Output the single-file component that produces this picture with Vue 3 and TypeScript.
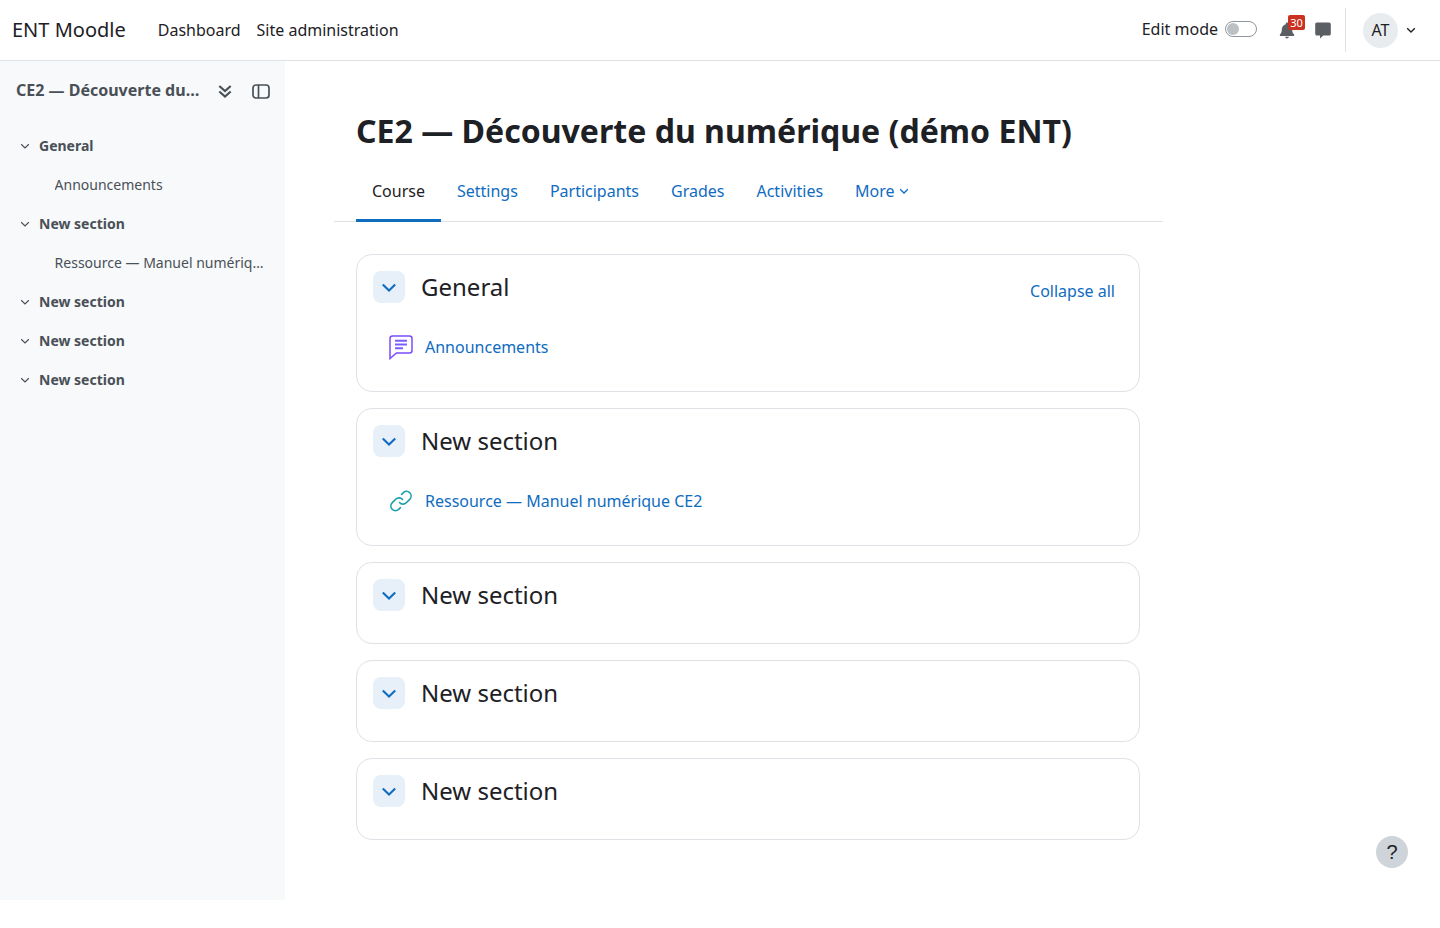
<script setup lang="ts">
/**
 * Course page with top navbar, course index drawer and section cards
 */
interface CourseSection {
  title: string;
  activity?: { label: string; kind: 'forum' | 'url' };
}

const navLinks = ['Dashboard', 'Site administration'];
const tabs = ['Settings', 'Participants', 'Grades', 'Activities'];

const indexItems = [
  { title: 'General', child: 'Announcements' },
  { title: 'New section', child: 'Ressource — Manuel numérique CE2' },
  { title: 'New section' },
  { title: 'New section' },
  { title: 'New section' }
];

const sections: CourseSection[] = [
  { title: 'General', activity: { label: 'Announcements', kind: 'forum' } },
  { title: 'New section', activity: { label: 'Ressource — Manuel numérique CE2', kind: 'url' } },
  { title: 'New section' },
  { title: 'New section' },
  { title: 'New section' }
];
</script>

<template>
  <div class="page">
    <header class="navbar">
      <span class="brand">ENT Moodle</span>
      <nav class="nav-links">
        <a v-for="link in navLinks" :key="link" class="nav-link">{{ link }}</a>
      </nav>
      <div class="nav-right">
        <span class="edit-label">Edit mode</span>
        <span class="switch"><span class="switch-knob"></span></span>
        <span class="bell">
          <svg width="16" height="18" viewBox="0 0 16 18">
            <path fill="#5b5f64" d="M8 1.500c-.7 0-1.200.5-1.200 1.200v.6C4.300 3.900 2.800 6 2.800 8.400c0 2.700-.7 3.700-1.600 4.700-.3.300-.4.600-.4.900 0 .6.500 1 1 1h12.400c.5 0 1-.4 1-1 0-.3-.1-.6-.4-.9-.9-1-1.600-2-1.600-4.700 0-2.400-1.500-4.500-4-5.100v-.6C9.200 2 8.700 1.500 8 1.500zM6.200 15.800c0 1 .8 1.700 1.800 1.700s1.800-.7 1.800-1.700z" />
          </svg>
          <span class="badge">30</span>
        </span>
        <svg class="chat" width="16" height="17" viewBox="0 0 16 17">
          <path fill="#5b5f64" d="M2 .5h12c1 0 1.800.8 1.800 1.800v9.400c0 1-.8 1.800-1.800 1.800H8.200l-3.200 3v-3H2c-1 0-1.800-.8-1.800-1.800V2.300C.2 1.300 1 .5 2 .5z" />
        </svg>
        <span class="nav-divider"></span>
        <span class="avatar">AT</span>
        <svg class="user-caret" width="10" height="10" viewBox="0 0 10 10">
          <path d="M1.200 3.300 5 7l3.800-3.700" fill="none" stroke="#1d2125" stroke-width="1.400" />
        </svg>
      </div>
    </header>

    <div class="body-row">
      <aside class="drawer">
        <div class="drawer-head">
          <span class="drawer-title">CE2 — Découverte du numérique (démo ENT)</span>
          <svg class="collapse-icon" width="14" height="16" viewBox="0 0 14 16">
            <path d="M1.300 3 7 8l5.700-5M1.300 8.500 7 13.500l5.700-5" fill="none" stroke="#495057" stroke-width="2.200" />
          </svg>
          <svg class="panel-icon" width="18" height="16" viewBox="0 0 18 16">
            <rect x="1" y="2" width="16" height="13" rx="3" fill="none" stroke="#495057" stroke-width="1.700" />
            <path d="M6.500 2v13" stroke="#495057" stroke-width="1.700" />
          </svg>
        </div>
        <ul class="index">
          <li v-for="(item, i) in indexItems" :key="i" class="index-group">
            <div class="index-section">
              <svg width="10" height="10" viewBox="0 0 10 10">
                <path d="M1.200 3.300 5 7l3.800-3.700" fill="none" stroke="#495057" stroke-width="1.200" />
              </svg>
              <span>{{ item.title }}</span>
            </div>
            <div v-if="item.child" class="index-child">{{ item.child }}</div>
          </li>
        </ul>
      </aside>

      <main class="main">
        <h1 class="course-title">CE2 — Découverte du numérique (démo ENT)</h1>
        <div class="tabs">
          <a class="tab tab-active">Course</a>
          <a v-for="tab in tabs" :key="tab" class="tab">{{ tab }}</a>
          <a class="tab">
            More
            <svg class="more-caret" width="10" height="10" viewBox="0 0 10 10">
              <path d="M1.200 3.300 5 7l3.800-3.700" fill="none" stroke="#0f6cbf" stroke-width="1.300" />
            </svg>
          </a>
        </div>

        <section v-for="(section, i) in sections" :key="i" class="card">
          <div class="card-head">
            <span class="toggle">
              <svg width="16" height="16" viewBox="0 0 16 16">
                <path d="M1.800 5.500 8 11.500l6.200-6" fill="none" stroke="#0f6cbf" stroke-width="2.100" />
              </svg>
            </span>
            <h2 class="section-title">{{ section.title }}</h2>
            <a v-if="i === 0" class="collapse-all">Collapse all</a>
          </div>
          <div v-if="section.activity" class="activity">
            <svg v-if="section.activity.kind === 'forum'" width="26" height="26" viewBox="0 0 26 26">
              <path d="M4.500 2h17c1.500 0 2.500 1 2.500 2.500v12c0 1.500-1 2.500-2.500 2.500H8.500L2 24.500v-20C2 3 3 2 4.500 2z" fill="none" stroke="#7a4dff" stroke-width="1.500" />
              <path d="M7 6.800h12M7 10.500h12M7 14.200h8" stroke="#7a5cff" stroke-width="2" />
            </svg>
            <svg v-else width="26" height="26" viewBox="0 0 26 26">
              <g fill="none" stroke="#1a9fae" stroke-width="1.600" stroke-linecap="round">
                <path d="M11.500 14.500a4.600 4.600 0 0 0 6.800.2l3.600-3.600a4.600 4.600 0 0 0-6.500-6.500l-1.800 1.800" />
                <path d="M14.500 11.500a4.600 4.600 0 0 0-6.800-.2l-3.600 3.600a4.600 4.600 0 0 0 6.500 6.500l1.800-1.800" />
              </g>
            </svg>
            <a class="activity-link">{{ section.activity.label }}</a>
          </div>
        </section>
      </main>
    </div>

    <span class="help">?</span>
  </div>
</template>

<style>
html,
body {
  margin: 0;
  background: #fff;
}
</style>

<style scoped>
.page {
  position: relative;
  height: 928px;
  overflow: hidden;
  font-family: "Noto Sans", sans-serif;
  font-size: 16px;
  color: #1d2125;
  background: #fff;
}

.navbar {
  display: flex;
  align-items: center;
  height: 60px;
  padding: 0 12px;
  border-bottom: 1px solid #dee2e6;
  background: #fff;
}

.brand {
  font-size: 20px;
  line-height: 30px;
  margin-right: 16px;
}

.nav-links {
  display: flex;
  margin-left: 8px;
}

.nav-link {
  padding: 0 8px;
  line-height: 24px;
}

.nav-right {
  display: flex;
  align-items: center;
  margin-left: auto;
  height: 44px;
}

.edit-label {
  margin-top: -2px;
  margin-right: 7px;
}

.switch {
  position: relative;
  box-sizing: border-box;
  width: 32px;
  height: 16px;
  margin-top: -2px;
  border: 1px solid #8f959e;
  border-radius: 8px;
  background: #fff;
}

.switch-knob {
  position: absolute;
  left: 1px;
  top: 1px;
  width: 12px;
  height: 12px;
  border-radius: 50%;
  background: #bcc1c6;
}

.bell {
  position: relative;
  display: flex;
  margin-left: 22px;
}

.badge {
  position: absolute;
  left: 9px;
  top: -6px;
  min-width: 17px;
  height: 15px;
  font-size: 11px;
  line-height: 15px;
  text-align: center;
  color: #fff;
  background: #ca3120;
  border-radius: 2px;
}

.chat {
  margin-left: 20px;
}

.nav-divider {
  width: 1px;
  height: 44px;
  margin-left: 14px;
  background: #dee2e6;
}

.avatar {
  display: flex;
  align-items: center;
  justify-content: center;
  width: 35px;
  height: 35px;
  margin-left: 17px;
  border-radius: 50%;
  background: #e9ecef;
}

.user-caret {
  margin-left: 8px;
  margin-right: 12px;
}

.body-row {
  display: flex;
}

.drawer {
  box-sizing: border-box;
  width: 285px;
  height: 839px;
  flex-shrink: 0;
  padding: 0 16px;
  background: #f8f9fa;
  color: #495057;
}

.drawer-head {
  display: flex;
  align-items: center;
  height: 60px;
}

.drawer-title {
  flex: 0 0 184px;
  margin-top: -2px;
  font-weight: 700;
  font-size: 16px;
  white-space: nowrap;
  overflow: hidden;
  text-overflow: ellipsis;
}

.collapse-icon {
  flex-shrink: 0;
  margin-left: 18px;
}

.panel-icon {
  flex-shrink: 0;
  margin-left: 20px;
}

.index {
  list-style: none;
  margin: 5px 0 0;
  padding: 0;
}

.index-section {
  display: flex;
  align-items: center;
  gap: 9px;
  height: 39px;
  padding-left: 4px;
  font-size: 14px;
  font-weight: 700;
}

.index-child {
  width: 210px;
  height: 39px;
  margin-left: 38.6px;
  font-size: 14px;
  line-height: 39px;
  white-space: nowrap;
  overflow: hidden;
  text-overflow: ellipsis;
}

.main {
  box-sizing: border-box;
  width: 878px;
  padding: 48px 0 0 49px;
}

.course-title {
  margin: 0;
  font-size: 32.06px;
  line-height: 44px;
  font-weight: 700;
  padding-left: 22px;
}

.tabs {
  display: flex;
  width: 807px;
  height: 60px;
  margin-top: 8px;
  padding-left: 22px;
  border-bottom: 1px solid #dee2e6;
}

.tab {
  display: flex;
  align-items: center;
  gap: 4px;
  padding: 0 16px;
  color: #0f6cbf;
  line-height: 24px;
}

.tab-active {
  color: #1d2125;
  box-shadow: inset 0 -3px 0 #0f6cbf;
  margin-bottom: -1px;
  padding-bottom: 1px;
}

.more-caret {
  margin-top: -1px;
}

.card {
  box-sizing: border-box;
  margin: 0 0 16px 22px;
  width: 784px;
  min-height: 82px;
  padding: 16px;
  border: 1px solid #dee2e6;
  border-radius: 16px;
}

.card:first-of-type {
  margin-top: 32px;
}

.card-head {
  display: flex;
  align-items: center;
  height: 32px;
}

.toggle {
  display: flex;
  align-items: center;
  justify-content: center;
  width: 32px;
  height: 32px;
  border-radius: 8px;
  background: #e7eff9;
}

.section-title {
  margin: 0 0 0 16px;
  font-size: 24px;
  line-height: 32px;
  font-weight: 400;
}

.collapse-all {
  margin-left: auto;
  margin-right: 8px;
  margin-top: 8px;
  color: #0f6cbf;
}

.activity {
  display: flex;
  align-items: center;
  height: 26px;
  margin-top: 31px;
  margin-bottom: 15px;
  padding-left: 15px;
}

.activity-link {
  margin-left: 11px;
  color: #0f6cbf;
}

.help {
  position: absolute;
  left: 1376px;
  top: 836px;
  width: 32px;
  height: 32px;
  border-radius: 50%;
  background: #ced4da;
  font-family: "Liberation Sans", sans-serif;
  font-size: 20px;
  line-height: 32px;
  text-align: center;
}
</style>
